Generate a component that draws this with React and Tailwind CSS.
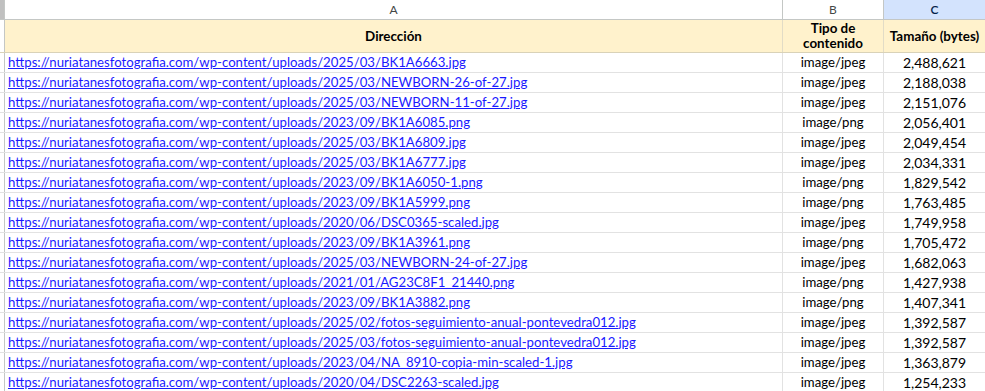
import React from "react";

const rows = [
  ["2025/03/BK1A6663.jpg", "image/jpeg", "2,488,621"],
  ["2025/03/NEWBORN-26-of-27.jpg", "image/jpeg", "2,188,038"],
  ["2025/03/NEWBORN-11-of-27.jpg", "image/jpeg", "2,151,076"],
  ["2023/09/BK1A6085.png", "image/png", "2,056,401"],
  ["2025/03/BK1A6809.jpg", "image/jpeg", "2,049,454"],
  ["2025/03/BK1A6777.jpg", "image/jpeg", "2,034,331"],
  ["2023/09/BK1A6050-1.png", "image/png", "1,829,542"],
  ["2023/09/BK1A5999.png", "image/png", "1,763,485"],
  ["2020/06/DSC0365-scaled.jpg", "image/jpeg", "1,749,958"],
  ["2023/09/BK1A3961.png", "image/png", "1,705,472"],
  ["2025/03/NEWBORN-24-of-27.jpg", "image/jpeg", "1,682,063"],
  ["2021/01/AG23C8F1_21440.png", "image/png", "1,427,938"],
  ["2023/09/BK1A3882.png", "image/png", "1,407,341"],
  ["2025/02/fotos-seguimiento-anual-pontevedra012.jpg", "image/jpeg", "1,392,587"],
  ["2025/03/fotos-seguimiento-anual-pontevedra012.jpg", "image/jpeg", "1,392,587"],
  ["2023/04/NA_8910-copia-min-scaled-1.jpg", "image/jpeg", "1,363,879"],
  ["2020/04/DSC2263-scaled.jpg", "image/jpeg", "1,254,233"],
];

export default function App() {
  return (
    <div
      className="w-[985px] h-[391px] overflow-hidden bg-white text-[13.2px] text-black"
      style={{ fontFamily: "Lato, 'Open Sans', sans-serif" }}
    >
      {/* column letters */}
      <div className="flex h-[20px] border-b border-[#c4c7c5] text-[12px] text-[#444746]">
        <div className="w-[5px] shrink-0 bg-[#c0c0c0] border-r border-[#c4c7c5]" />
        <div className="w-[778px] shrink-0 flex items-center justify-center border-r border-[#c4c7c5]">A</div>
        <div className="w-[101px] shrink-0 flex items-center justify-center border-r border-[#c4c7c5]">B</div>
        <div className="flex-1 flex items-center justify-center bg-[#d3e3fd] font-semibold text-[#041e49]">C</div>
      </div>
      {/* header row */}
      <div className="flex h-[33px] border-b border-[#d9d2b8] bg-[#fff2cc] font-bold leading-[15px] text-[13.4px]">
        <div className="w-[5px] shrink-0 bg-white border-r border-[#c4c7c5]" />
        <div className="w-[778px] shrink-0 flex items-center justify-center border-r border-[#e2dcc6]">Dirección</div>
        <div className="w-[101px] shrink-0 flex flex-col items-center justify-center text-center border-r border-[#e2dcc6]">
          <span>Tipo de</span>
          <span>contenido</span>
        </div>
        <div className="flex-1 flex items-center justify-center">Tamaño (bytes)</div>
      </div>
      {rows.map(([path, type, size], i) => (
        <div key={i} className="flex h-[20px] border-b border-[#e2e2e2]">
          <div className="w-[5px] shrink-0 bg-white border-r border-[#c4c7c5]" />
          <div className="w-[778px] shrink-0 flex items-center pl-[3px] border-r border-[#e2e2e2] overflow-hidden whitespace-nowrap">
            <span className="text-[#1a1aff] underline">
              https://nuriatanesfotografia.com/wp-content/uploads/{path}
            </span>
          </div>
          <div className="w-[101px] shrink-0 flex items-center justify-center border-r border-[#e2e2e2]">{type}</div>
          <div className="flex-1 flex items-center justify-center text-[14px]">{size}</div>
        </div>
      ))}
    </div>
  );
}
